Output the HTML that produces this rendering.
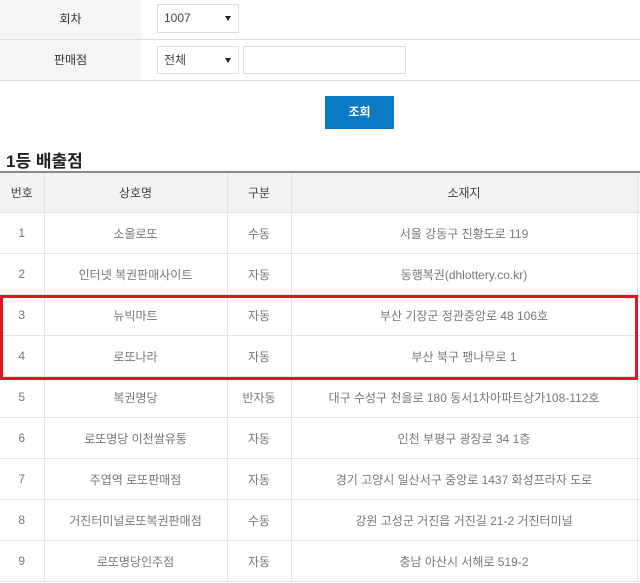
<!DOCTYPE html>
<html><head><meta charset="utf-8"><style>
body{margin:0;width:640px;height:583px;overflow:hidden;background:#fff;font-family:"Liberation Sans","Noto Sans CJK KR",sans-serif;color:#555;font-size:12px;position:relative}
.abs{position:absolute}
.lab{background:#f5f5f5;left:0;width:141px;text-align:center;color:#333}
.sel{border:1px solid #ddd;background:#fff;box-sizing:border-box;font-size:12px;color:#444;padding-left:6px}
.sel:after{content:"";position:absolute;right:7px;top:11px;border-left:3px solid transparent;border-right:3px solid transparent;border-top:5px solid #222}
table{position:absolute;left:0;top:171px;width:640px;border-collapse:collapse;border-top:2px solid #888;table-layout:fixed}
td,th{border-bottom:1px solid #e3e3e3;border-left:1px solid #e3e3e3;text-align:center;font-weight:normal;height:40px;padding:0;font-size:12px;color:#777}
th{background:#f3f3f3;color:#444;height:39px}
td:first-child,th:first-child{border-left:none}
</style></head><body>
<div class="abs lab" style="top:0;height:39px;line-height:39px;border-bottom:1px solid #ddd">회차</div>
<div class="abs lab" style="top:40px;height:40px;line-height:40px">판매점</div>
<div class="abs" style="left:0;top:80px;width:640px;height:1px;background:#ddd"></div>
<div class="abs" style="left:141px;top:0;width:499px;height:39px;border-bottom:1px solid #ddd"></div>
<div class="abs sel" style="left:157px;top:4px;width:82px;height:29px;line-height:27px">1007</div>
<div class="abs sel" style="left:157px;top:46px;width:82px;height:28px;line-height:26px">전체</div>
<div class="abs" style="left:243px;top:46px;width:163px;height:28px;border:1px solid #ddd;box-sizing:border-box"></div>
<div class="abs" style="left:325px;top:96px;width:69px;height:33px;background:#0d7ac6;color:#fff;text-align:center;line-height:33px;font-weight:bold;font-size:12px">조회</div>
<div class="abs" style="left:6px;top:147px;font-size:17px;font-weight:bold;color:#222">1등 배출점</div>
<table>
<colgroup><col style="width:44px"><col style="width:183px"><col style="width:64px"><col style="width:346px"><col style="width:3px"></colgroup>
<tr><th>번호</th><th>상호명</th><th>구분</th><th>소재지</th><th></th></tr>
<tr><td>1</td><td>소울로또</td><td>수동</td><td>서울 강동구 진황도로 119</td><td></td></tr>
<tr><td>2</td><td>인터넷 복권판매사이트</td><td>자동</td><td>동행복권(dhlottery.co.kr)</td><td></td></tr>
<tr><td>3</td><td>뉴빅마트</td><td>자동</td><td>부산 기장군 정관중앙로 48 106호</td><td></td></tr>
<tr><td>4</td><td>로또나라</td><td>자동</td><td>부산 북구 팽나무로 1</td><td></td></tr>
<tr><td>5</td><td>복권명당</td><td>반자동</td><td>대구 수성구 천을로 180 동서1차아파트상가108-112호</td><td></td></tr>
<tr><td>6</td><td>로또명당 이천쌀유통</td><td>자동</td><td>인천 부평구 광장로 34 1층</td><td></td></tr>
<tr><td>7</td><td>주엽역 로또판매점</td><td>자동</td><td>경기 고양시 일산서구 중앙로 1437 화성프라자 도로</td><td></td></tr>
<tr><td>8</td><td>거진터미널로또복권판매점</td><td>수동</td><td>강원 고성군 거진읍 거진길 21-2 거진터미널</td><td></td></tr>
<tr><td>9</td><td>로또명당인주점</td><td>자동</td><td>충남 아산시 서해로 519-2</td><td></td></tr>
</table>
<div class="abs" style="left:0;top:295px;width:638px;height:85px;border:3px solid #e3141f;box-sizing:border-box"></div>
</body></html>
